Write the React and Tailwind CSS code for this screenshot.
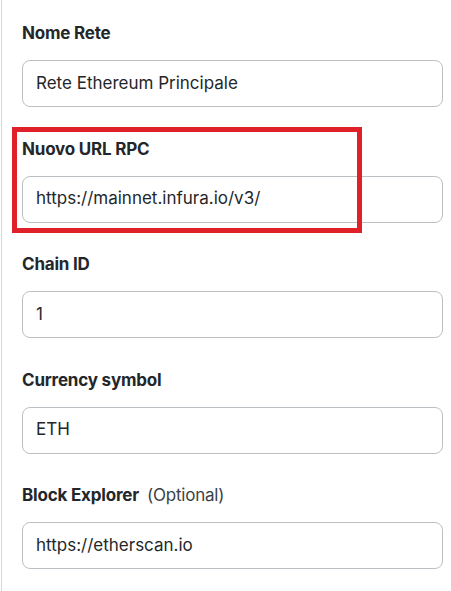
export default function App() {
  const fields = [
    { label: "Nome Rete", value: "Rete Ethereum Principale" },
    { label: "Nuovo URL RPC", value: "https://mainnet.infura.io/v3/", highlight: true },
    { label: "Chain ID", value: "1" },
    { label: "Currency symbol", value: "ETH" },
    { label: "Block Explorer", optional: "(Optional)", value: "https://etherscan.io" },
  ];
  return (
    <div
      className="w-[451px] h-[591px] bg-white overflow-hidden"
      style={{ fontFamily: "Inter, 'Liberation Sans', sans-serif" }}
    >
      <div className="ml-[1px] h-full border-l-[1px] border-[#d6d9dc] pl-[20px] pr-[8px] pt-[22px]">
        <div className="flex flex-col">
          {fields.map((f, i) => (
            <div key={i} className="relative flex flex-col mb-[30.5px]">
              {f.highlight && (
                <div className="absolute left-[-10px] top-[-11px] w-[350px] h-[106px] border-[5px] border-[#e0212a] pointer-events-none" />
              )}
              <div className="h-[24px] flex items-center text-[17px] tracking-[-0.2px] text-[#24272a]">
                <span className="font-bold">{f.label}</span>
                {f.optional && (
                  <span className="ml-[8px] font-normal text-[#3a3f45]">{f.optional}</span>
                )}
              </div>
              <div className="mt-[14px] h-[47px] rounded-[8px] border border-[#bbc0c5] flex items-center pl-[13px] text-[17px] text-[#24272a]">
                {f.value}
              </div>
            </div>
          ))}
        </div>
      </div>
    </div>
  );
}
